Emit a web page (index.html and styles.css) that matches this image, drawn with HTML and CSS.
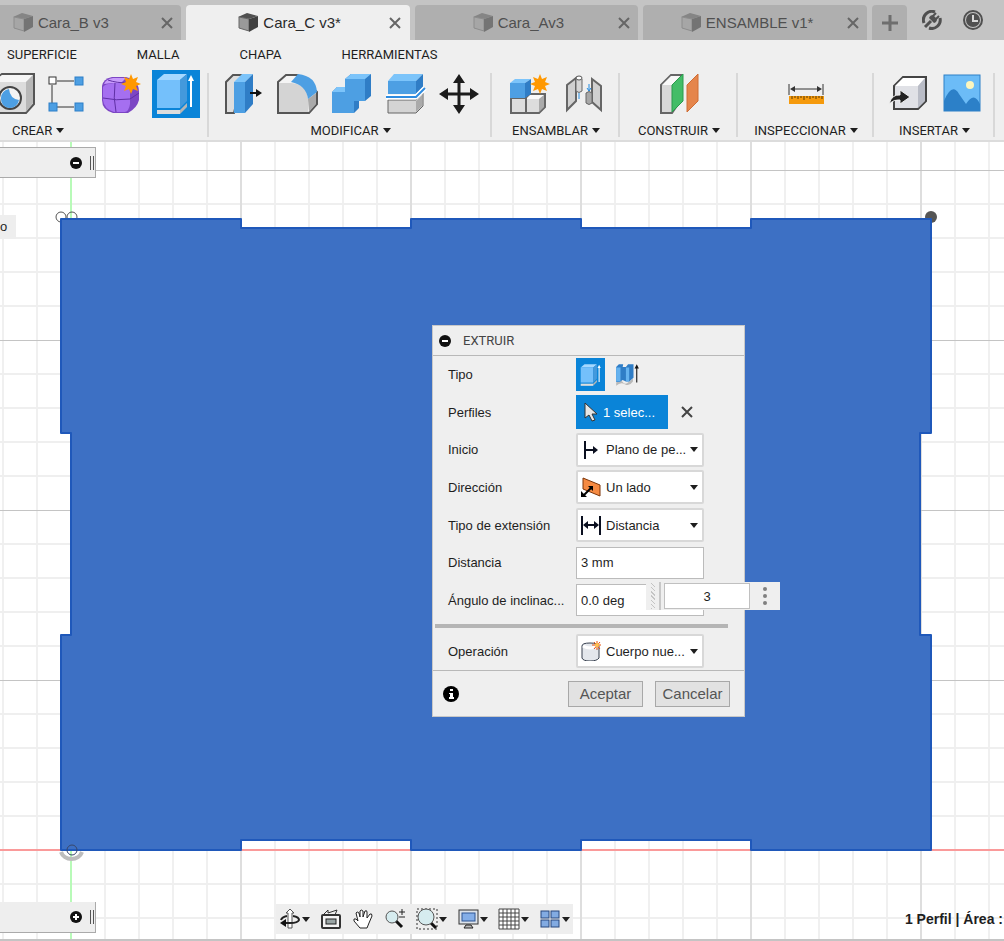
FILE: index.html
```
<!DOCTYPE html>
<html lang="es">
<head>
    <meta charset="UTF-8">
    <meta name="viewport" content="width=device-width, initial-scale=1.0">
    <title>Cara_C v3*</title>
    <link rel="stylesheet" href="styles.css">
</head>
<body>

    <!-- Símbolos compartidos -->
    <svg class="symbols" width="0" height="0" aria-hidden="true">
        <symbol id="cube" viewBox="0 0 20 20">
            <path d="M0 4 L9 0 L20 3 L11 6 Z" fill="#858585"/>
            <path d="M1 4 L11 6 L11 18 L1 15 Z" fill="#a6a6a6" stroke="#8c8c8c"/>
            <path d="M11 6 L20 3 L20 14 L11 19 Z" fill="#747474"/>
        </symbol>
        <symbol id="cube-dark" viewBox="0 0 20 20">
            <path d="M0 4 L9 0 L20 3 L11 6 Z" fill="#505050"/>
            <path d="M1 4 L11 6 L11 18 L1 15 Z" fill="#9a9a9a" stroke="#666"/>
            <path d="M11 6 L20 3 L20 14 L11 19 Z" fill="#404040"/>
        </symbol>
        <symbol id="cross" viewBox="0 0 12 12">
            <path d="M1 1 L11 11 M11 1 L1 11" stroke="currentColor" stroke-width="2"/>
        </symbol>
        <symbol id="star" viewBox="0 0 20 20">
            <path d="M10 0 L12 5 L17 3 L15 8 L20 10 L15 12 L17 17 L12 15 L10 20 L8 15 L3 17 L5 12 L0 10 L5 8 L3 3 L8 5 Z" fill="#ff9800"/>
        </symbol>
        <symbol id="extrude" viewBox="0 0 48 48">
            <path d="M5 40 H28 V44 H5 Z" fill="#ddd"/>
            <path d="M28 40 L35 33 V37 L28 44 Z" fill="#b5b5b5"/>
            <path d="M5 10 L12 4 H35 L28 10 Z" fill="#a5d8ff"/>
            <path d="M5 10 H28 V38 H5 Z" fill="#74c0fb"/>
            <path d="M28 10 L35 4 V31 L28 38 Z" fill="#4399dc"/>
            <path d="M39 37 V9" stroke="#fff" stroke-width="2"/>
            <path d="M36 11 L39 5 L42 11 Z" fill="#fff"/>
        </symbol>
    </svg>

    <header class="header">
        <div class="tab-bar">
            <nav class="tabs">
                <div class="tab">
                    <svg class="tab-icon"><use href="#cube"/></svg>
                    <span class="tab-name">Cara_B v3</span>
                    <button class="tab-close" aria-label="Cerrar Cara_B"><svg><use href="#cross"/></svg></button>
                </div>
                <div class="tab active">
                    <svg class="tab-icon"><use href="#cube-dark"/></svg>
                    <span class="tab-name">Cara_C v3*</span>
                    <button class="tab-close" aria-label="Cerrar Cara_C"><svg><use href="#cross"/></svg></button>
                </div>
                <div class="tab">
                    <svg class="tab-icon"><use href="#cube"/></svg>
                    <span class="tab-name">Cara_Av3</span>
                    <button class="tab-close" aria-label="Cerrar Cara_A"><svg><use href="#cross"/></svg></button>
                </div>
                <div class="tab">
                    <svg class="tab-icon"><use href="#cube"/></svg>
                    <span class="tab-name">ENSAMBLE v1*</span>
                    <button class="tab-close" aria-label="Cerrar ENSAMBLE"><svg><use href="#cross"/></svg></button>
                </div>
                <button class="tab-new" aria-label="Nueva pestaña">
                    <svg width="16" height="16" viewBox="0 0 16 16"><path d="M8 0 V16 M0 8 H16" stroke="#6e6e6e" stroke-width="3"/></svg>
                </button>
            </nav>
            <div class="tab-tools">
                <button aria-label="Extensiones">
                    <svg width="20" height="20" viewBox="0 0 20 20" fill="none">
                        <path d="M13 2 A8.500 8.500 0 0 0 2 13 M7 18 A8.500 8.500 0 0 0 18 8" stroke="#505050" stroke-width="3"/>
                        <path d="M3 17 L9 11" stroke="#505050" stroke-width="3"/>
                        <path d="M7 8 Q8 5 11 5 L15 9 Q15 12 12 13 Z" fill="#505050"/>
                        <path d="M11 6 L14 3 M14 9 L17 6" stroke="#505050" stroke-width="2"/>
                    </svg>
                </button>
                <button aria-label="Estado del trabajo">
                    <svg width="20" height="20" viewBox="0 0 20 20" fill="none">
                        <circle cx="10" cy="10" r="9" stroke="#505050" stroke-width="2"/>
                        <circle cx="10" cy="10" r="7" fill="#505050"/>
                        <path d="M10 5 V11 H15" stroke="#d8d8d8" stroke-width="2"/>
                    </svg>
                </button>
            </div>
        </div>

        <nav class="menu">
            <a href="#superficie">SUPERFICIE</a>
            <a href="#malla">MALLA</a>
            <a href="#chapa">CHAPA</a>
            <a href="#herramientas">HERRAMIENTAS</a>
        </nav>

        <div class="toolbar">
            <div class="group group-create">
                <div class="tools">
                    <button class="tool" aria-label="Agujero">
                        <svg viewBox="0 0 48 48">
                            <path d="M2 12 L12 4 H44 V34 L36 43 H2 Z" fill="#dcdcdc" stroke="#555" stroke-width="2"/>
                            <path d="M2 12 L12 5 H43 L36 12 Z" fill="#f6f6f6"/>
                            <path d="M36 12 L43 5 V33 L36 42 Z" fill="#b8b8b8"/>
                            <circle cx="20" cy="28" r="11" fill="#f4f4f4" stroke="#444" stroke-width="2"/>
                            <path d="M19 19 Q20 29 29 30 A9 9 0 0 1 11 28 A9 9 0 0 1 19 19 Z" fill="#4d9fe3"/>
                        </svg>
                    </button>
                    <button class="tool" aria-label="Crear boceto">
                        <svg viewBox="0 0 48 48">
                            <path d="M8 15 V33 M13 11 H30 M13 37 H30" stroke="#333" stroke-width="1"/>
                            <rect x="5" y="7" width="7" height="7" fill="#fff" stroke="#333"/>
                            <rect x="31" y="7" width="8" height="8" fill="#4d9fe3" stroke="#2c7fc8"/>
                            <rect x="5" y="33" width="8" height="8" fill="#4d9fe3" stroke="#2c7fc8"/>
                            <rect x="31" y="33" width="8" height="8" fill="#4d9fe3" stroke="#2c7fc8"/>
                        </svg>
                    </button>
                    <button class="tool" aria-label="Crear forma">
                        <svg viewBox="0 0 48 48">
                            <path d="M4 16 Q5 9 14 7 H28 Q41 10 41 22 V30 Q39 38 30 43 H15 Q4 40 4 30 Z" fill="#7c46c4"/>
                            <path d="M5 17 Q6 14 16 13 H26 Q32 15 32 22 V34 Q31 41 27 42 H16 Q6 39 5 30 Z" fill="#a56ff0"/>
                            <path d="M6 14 Q8 9 15 8 H28 L23 13 H14 Z" fill="#c79bfb"/>
                            <path d="M5 28 Q18 31 32 29 L41 23 M17 13 Q15 28 18 42 M10 10 Q18 13 31 13" fill="none" stroke="#5f2fa5"/>
                            <use href="#star" x="23" y="4" width="20" height="20"/>
                        </svg>
                    </button>
                    <button class="tool selected" aria-label="Extruir"><svg><use href="#extrude"/></svg></button>
                </div>
                <button class="group-name">CREAR<i class="caret"></i></button>
            </div>

            <div class="group">
                <div class="tools">
                    <button class="tool" aria-label="Pulsar/tirar">
                        <svg viewBox="0 0 48 48">
                            <path d="M7 12 L14 5 H24 L15 43 H7 Z" fill="#dedede" stroke="#555" stroke-width="2"/>
                            <path d="M15 12 L23 4 H34 L26 12 Z" fill="#7cc4fa"/>
                            <path d="M15 12 H26 V43 H15 Z" fill="#4d9fe3"/>
                            <path d="M26 12 L34 4 V34 L26 43 Z" fill="#2f7dc6"/>
                            <path d="M31 23 H38" stroke="#111" stroke-width="2"/>
                            <path d="M37 19 L43 23 L37 27 Z" fill="#111"/>
                        </svg>
                    </button>
                    <button class="tool" aria-label="Empalme">
                        <svg viewBox="0 0 48 48">
                            <path d="M5 12 L13 5 H24 L44 22 V34 L36 43 H5 Z" fill="#f4f4f4" stroke="#555" stroke-width="2"/>
                            <path d="M6 13 H18 Q34 14 35 29 V42 H6 Z" fill="#d4d4d4"/>
                            <path d="M35 29 L43 23 V34 L36 42 Z" fill="#aaa"/>
                            <path d="M18 12 L25 4 Q43 6 44 22 L35 29 Q33 15 18 12 Z" fill="#4d9fe3"/>
                        </svg>
                    </button>
                    <button class="tool" aria-label="Combinar">
                        <svg viewBox="0 0 48 48">
                            <path d="M5 22 L10 17 H18 V9 L24 4 H44 V26 L38 31 H32 V38 L27 43 H5 Z" fill="#2f7dc6"/>
                            <path d="M5 22 H18 V9 H38 V31 H27 V43 H5 Z" fill="#4d9fe3"/>
                            <path d="M5 22 L10 17 H18 V22 Z M18 9 L24 4 H44 L38 9 Z" fill="#7cc4fa"/>
                        </svg>
                    </button>
                    <button class="tool" aria-label="Dividir cuerpo">
                        <svg viewBox="0 0 48 48">
                            <path d="M7 30 H35 L42 23 V36 L35 43 H7 Z" fill="#d4d4d4" stroke="#666" stroke-width="1"/>
                            <path d="M35 31 L41 25 V36 L35 42 Z" fill="#aaa"/>
                            <path d="M7 11 L13 4 H42 L35 11 Z" fill="#7cc4fa"/>
                            <path d="M7 11 H35 V24 H7 Z" fill="#4d9fe3"/>
                            <path d="M35 11 L42 4 V17 L35 24 Z" fill="#2f7dc6"/>
                            <path d="M5 27 H35 L44 18" fill="none" stroke="#fff" stroke-width="5"/>
                            <path d="M5 27 H35 L44 18" fill="none" stroke="#2f8ce0" stroke-width="2"/>
                        </svg>
                    </button>
                    <button class="tool" aria-label="Desplazar">
                        <svg viewBox="0 0 48 48">
                            <path d="M24 10 V38 M10 24 H38" stroke="#1c1c1c" stroke-width="3"/>
                            <path d="M24 4 L30 13 H18 Z M24 44 L30 35 H18 Z M4 24 L13 18 V30 Z M44 24 L35 18 V30 Z" fill="#1c1c1c"/>
                        </svg>
                    </button>
                </div>
                <button class="group-name">MODIFICAR<i class="caret"></i></button>
            </div>

            <div class="group">
                <div class="tools">
                    <button class="tool" aria-label="Nuevo componente">
                        <svg viewBox="0 0 48 48">
                            <path d="M6 28 H21 L25 24 H40 V37 L34 43 H6 Z" fill="#ddd" stroke="#666" stroke-width="2"/>
                            <path d="M21 29 L25 25 H39 L34 29 Z" fill="#fafafa"/>
                            <path d="M34 29 L39 25 V37 L34 42 Z" fill="#aaa"/>
                            <path d="M21 28 V43" stroke="#666" stroke-width="2"/>
                            <path d="M5 13 L10 9 H26 L20 13 Z" fill="#7cc4fa"/>
                            <path d="M5 13 H20 V28 H5 Z" fill="#4d9fe3"/>
                            <path d="M20 13 L26 9 V24 L20 28 Z" fill="#2f7dc6"/>
                            <use href="#star" x="25" y="4" width="20" height="20"/>
                        </svg>
                    </button>
                    <button class="tool" aria-label="Unión">
                        <svg viewBox="0 0 48 48">
                            <path d="M8 15 L17 8 V31 L8 40 Z" fill="#d0d0d0" stroke="#666" stroke-width="2"/>
                            <path d="M17 9 Q20 5 23 9 V21 Q20 24 17 21 Z" fill="#d6d6d6" stroke="#666" stroke-width="1"/>
                            <ellipse cx="20" cy="8" rx="3" ry="2" fill="#fff" stroke="#555"/>
                            <path d="M33 9 L42 16 V40 L33 32 Z" fill="#d0d0d0" stroke="#666" stroke-width="2"/>
                            <path d="M27 23 Q30 20 33 23 V33 Q30 36 27 33 Z" fill="#a8a8a8" stroke="#666" stroke-width="1"/>
                            <path d="M20 23 V29 M30 14 V21 M28 18 L30 21 L32 18" fill="none" stroke="#218ae0" stroke-width="1"/>
                        </svg>
                    </button>
                </div>
                <button class="group-name">ENSAMBLAR<i class="caret"></i></button>
            </div>

            <div class="group">
                <div class="tools">
                    <button class="tool" aria-label="Plano de desfase">
                        <svg viewBox="0 0 48 48">
                            <path d="M6 15 L16 5 H26 V30 L17 43 H6 Z" fill="#d8d8d8" stroke="#666" stroke-width="2"/>
                            <path d="M7 15 L16 6 H25 L17 15 Z" fill="#f8f8f8"/>
                            <path d="M17 15 L28 4 V31 L17 42 Z" fill="#43bd67" stroke="#2a9a4c"/>
                            <path d="M32 15 L43 4 V31 L32 42 Z" fill="#e5854b" stroke="#cf6c34"/>
                        </svg>
                    </button>
                </div>
                <button class="group-name">CONSTRUIR<i class="caret"></i></button>
            </div>

            <div class="group">
                <div class="tools">
                    <button class="tool" aria-label="Medir">
                        <svg viewBox="0 0 48 48">
                            <path d="M7 14 V25 M41 14 V25 M10 19 H38" stroke="#333" stroke-width="1"/>
                            <path d="M8 19 L13 16 V22 Z M40 19 L35 16 V22 Z" fill="#333"/>
                            <path d="M7 26 H42 V34 H7 Z" fill="#f59a0c"/>
                            <path d="M10 26 V29 M13 26 V28 M16 26 V29 M19 26 V28 M22 26 V30 M25 26 V28 M28 26 V29 M31 26 V28 M34 26 V29 M37 26 V28 M40 26 V29" stroke="#5a3b00"/>
                        </svg>
                    </button>
                </div>
                <button class="group-name">INSPECCIONAR<i class="caret"></i></button>
            </div>

            <div class="group">
                <div class="tools">
                    <button class="tool" aria-label="Insertar derivado">
                        <svg viewBox="0 0 48 48">
                            <path d="M10 16 L19 7 H42 V31 L34 39 H10 Z" fill="#e0e1e6" stroke="#444" stroke-width="2"/>
                            <path d="M11 16 L19 8 H41 L34 16 Z" fill="#fff"/>
                            <path d="M34 16 L41 8 V31 L34 38 Z" fill="#b9bcc6"/>
                            <path d="M5 34 Q8 24 16 25 V20 L26 27 L16 34 V30 Q10 29 5 34 Z" fill="#222" stroke="#eee"/>
                        </svg>
                    </button>
                    <button class="tool" aria-label="Lienzo">
                        <svg viewBox="0 0 48 48">
                            <rect x="6" y="5" width="36" height="36" fill="#6cbcf7"/>
                            <path d="M6 31 Q14 12 21 24 L28 34 Q36 21 42 34 V41 H6 Z" fill="#2c80c8"/>
                            <circle cx="32" cy="15" r="4" fill="#fdf6bd"/>
                            <rect x="6" y="5" width="36" height="36" fill="none" stroke="#2c80c8"/>
                        </svg>
                    </button>
                </div>
                <button class="group-name">INSERTAR<i class="caret"></i></button>
            </div>
        </div>
    </header>

    <main class="canvas">
        <svg class="sketch" aria-hidden="true">
            <defs>
                <pattern id="grid" x="71" y="28" width="170" height="170" patternUnits="userSpaceOnUse">
                    <path d="M34 0 V170 M68 0 V170 M102 0 V170 M136 0 V170" stroke="#f0f0f0" stroke-width="2"/>
                    <path d="M0 34 H170 M0 68 H170 M0 102 H170 M0 136 H170" stroke="#efefef" stroke-width="2"/>
                    <path d="M0 0 V170 M170 0 V170" stroke="#dedede" stroke-width="2"/>
                    <path d="M0 0 H170" stroke="#c4c4c4" stroke-width="2"/>
                </pattern>
            </defs>
            <rect width="100%" height="100%" fill="url(#grid)"/>
            <!-- origen del boceto -->
            <svg x="71" y="708" overflow="visible">
                <path d="M-71 0 H4000" stroke="#fa9a9a" stroke-width="2"/>
                <path d="M0 -708 V200" stroke="#b8fab8" stroke-width="2"/>
                <path d="M-10 2 A11 10 0 0 0 11 2" fill="none" stroke="#bdbdbd" stroke-width="4"/>
                <g fill="none" stroke="#555">
                    <circle cx="-10" cy="-633" r="5"/>
                    <circle cx="1" cy="-633" r="5"/>
                </g>
                <circle cx="860" cy="-633" r="6" fill="#555"/>
                <path d="M-10 -631 H170 V-622 H340 V-631 H510 V-622 H680 V-631 H860 V-417 H849 V-215 H860 V0 H680 V-10 H510 V0 H340 V-10 H170 V0 H-10 V-215 H0 V-417 H-10 Z" fill="#3d70c4" stroke="#1f58ba" stroke-width="2" stroke-linejoin="round"/>
                <circle cx="1" cy="0" r="5" fill="none" stroke="#39476b"/>
            </svg>
        </svg>

        <div class="dock dock-top">
            <svg width="12" height="12" viewBox="0 0 12 12"><circle cx="6" cy="6" r="6" fill="#111"/><path d="M3 6 H9" stroke="#fff" stroke-width="2"/></svg>
            <i class="dock-grip"></i>
        </div>
        <div class="node-tag">o</div>

        <form class="dialog">
            <h2 class="dialog-title">
                <svg width="12" height="12" viewBox="0 0 12 12"><circle cx="6" cy="6" r="6" fill="#111"/><path d="M3 6 H9" stroke="#fff" stroke-width="2"/></svg>
                EXTRUIR
            </h2>
            <div class="fields">
                <div class="field">
                    <span class="field-name">Tipo</span>
                    <button type="button" class="type-button selected" aria-label="Extruir"><svg><use href="#extrude"/></svg></button>
                    <button type="button" class="type-button" aria-label="Extrusión fina">
                        <svg viewBox="0 0 48 48">
                            <path d="M4 38 Q12 30 16 37 T28 36 L35 31 V36 Q28 46 20 41 T4 44 Z" fill="#b9b9b9"/>
                            <path d="M4 9 L9 4 H17 L16 9 H22 L26 4 H36 V29 L28 36 H22 L16 33 L10 37 H4 Z" fill="#2f7dc6"/>
                            <path d="M4 10 H12 V36 H4 Z M22 10 H28 V36 H22 Z" fill="#65b2ef"/>
                            <path d="M42 38 V10" stroke="#111" stroke-width="2"/>
                            <path d="M38 12 L42 4 L46 12 Z" fill="#111"/>
                        </svg>
                    </button>
                </div>
                <div class="field">
                    <span class="field-name">Perfiles</span>
                    <button type="button" class="selection">
                        <svg width="14" height="20" viewBox="0 0 14 20"><path d="M1 1 V16 L5 13 L8 19 L11 18 L8 12 H13 Z" fill="#e6e6e6" stroke="#333"/></svg>
                        1 selec...
                    </button>
                    <button type="button" class="clear" aria-label="Borrar selección"><svg><use href="#cross"/></svg></button>
                </div>
                <div class="field">
                    <label class="field-name" for="start">Inicio</label>
                    <div class="picker">
                        <svg viewBox="0 0 20 20"><path d="M4 1 V19" stroke="#0b1020" stroke-width="2"/><path d="M5 10 H14" stroke="#0b1020" stroke-width="2"/><path d="M12 6 L17 10 L12 14 Z" fill="#0b1020"/></svg>
                        <select id="start"><option>Plano de pe...</option></select>
                    </div>
                </div>
                <div class="field">
                    <label class="field-name" for="direction">Dirección</label>
                    <div class="picker">
                        <svg viewBox="0 0 20 20"><path d="M2 1 L19 8 V19 L2 12 Z" fill="#f58a42" stroke="#7d3509"/><path d="M3 18 L10 11" stroke="#000" stroke-width="2"/><path d="M0 20 V14 L6 20 Z M12 9 V14 L7 9 Z" fill="#000"/></svg>
                        <select id="direction"><option>Un lado</option></select>
                    </div>
                </div>
                <div class="field">
                    <label class="field-name" for="extent">Tipo de extensión</label>
                    <div class="picker">
                        <svg viewBox="0 0 20 20"><path d="M1 1 V20 M19 1 V20" stroke="#0b1020" stroke-width="2"/><path d="M4 10 H16" stroke="#0b1020" stroke-width="2"/><path d="M2 10 L7 6 V14 Z M18 10 L13 6 V14 Z" fill="#0b1020"/></svg>
                        <select id="extent"><option>Distancia</option></select>
                    </div>
                </div>
                <div class="field">
                    <label class="field-name" for="distance">Distancia</label>
                    <input class="value" id="distance" type="text" value="3 mm">
                </div>
                <div class="field">
                    <label class="field-name" for="taper">Ángulo de inclinac...</label>
                    <input class="value" id="taper" type="text" value="0.0 deg">
                </div>
            </div>
            <hr class="divider">
            <div class="field field-operation">
                <label class="field-name" for="operation">Operación</label>
                <div class="picker">
                    <svg viewBox="0 0 20 20"><path d="M1 5 Q1 2 9 2 T18 5 V17 Q16 20 9 20 T1 17 Z" fill="#e4e7ec" stroke="#38404f" stroke-width="1"/><path d="M2 5 Q9 9 17 5" fill="none" stroke="#fff" stroke-width="3"/><path d="M16 0 V9 M11 4 H20 M13 1 L19 8 M19 1 L13 8" stroke="#e8500d" stroke-width="1"/><circle cx="16" cy="4" r="2" fill="#ffc44d"/></svg>
                    <select id="operation"><option>Cuerpo nue...</option></select>
                </div>
            </div>
            <div class="dialog-footer">
                <svg width="16" height="16" viewBox="0 0 16 16"><circle cx="8" cy="8" r="8" fill="#000"/><path d="M7 3 H10 V5 H7 Z M6 7 H10 V11 H11 V13 H6 V11 H7 V8 H6 Z" fill="#fff"/></svg>
                <button type="button">Aceptar</button>
                <button type="button">Cancelar</button>
            </div>
        </form>

        <div class="quick-input">
            <i class="grip"></i>
            <input type="text" value="3" aria-label="Distancia">
            <button aria-label="Más opciones">
                <svg width="4" height="18" viewBox="0 0 4 18" fill="#808080"><circle cx="2" cy="2" r="2"/><circle cx="2" cy="9" r="2"/><circle cx="2" cy="16" r="2"/></svg>
            </button>
        </div>

        <div class="dock dock-bottom">
            <svg width="12" height="12" viewBox="0 0 12 12"><circle cx="6" cy="6" r="6" fill="#111"/><path d="M3 6 H9 M6 3 V9" stroke="#fff" stroke-width="2"/></svg>
            <i class="dock-grip"></i>
        </div>

        <div class="nav-bar">
            <button aria-label="Orbitar">
                <svg viewBox="0 0 22 22" fill="none"><path d="M9 20 V5 H7 L11 1 L15 5 H13 V20 Z" fill="#fff" stroke="#555"/><path d="M14 8 Q20 9 20 12 Q19 15 11 15 H7 M2 12 Q3 9 8 8" stroke="#222" stroke-width="2"/><path d="M1 15 L7 11 V19 Z" fill="#111"/></svg>
                <i class="caret"></i>
            </button>
            <button aria-label="Mirar a">
                <svg viewBox="0 0 22 22"><path d="M3 7 L8 2 L8 5 L17 2 L15 7" fill="#eee" stroke="#333"/><rect x="2" y="7" width="18" height="13" rx="1" fill="#f4f4f4" stroke="#333" stroke-width="2"/><rect x="6" y="11" width="10" height="5" fill="#9aa5a5" stroke="#222"/></svg>
            </button>
            <button aria-label="Encuadre">
                <svg viewBox="0 0 22 22"><path d="M8 20 L2 13 Q1 10 4 11 L6 13 L4 5 Q5 3 7 5 L8 9 L8 3 Q9 1 11 3 L11 9 L13 3 Q15 2 15 4 L15 10 L18 6 Q20 5 20 8 L17 15 L15 20 Z" fill="#fff" stroke="#222"/></svg>
            </button>
            <button aria-label="Zoom">
                <svg viewBox="0 0 22 22"><path d="M12 13 L18 19" stroke="#111" stroke-width="3"/><circle cx="8" cy="9" r="6" fill="#d6ecef" stroke="#555" stroke-width="1"/><path d="M18 1 V7 M15 4 H21 M15 9 H21" stroke="#222"/></svg>
            </button>
            <button aria-label="Ajustar">
                <svg viewBox="0 0 22 22"><rect x="1" y="1" width="20" height="20" fill="none" stroke="#333" stroke-dasharray="2 2"/><path d="M14 14 L20 20" stroke="#111" stroke-width="3"/><circle cx="10" cy="9" r="8" fill="#d6ecef" stroke="#555" stroke-width="1"/></svg>
                <i class="caret"></i>
            </button>
            <button aria-label="Configuración de visualización">
                <svg viewBox="0 0 22 22"><rect x="2" y="2" width="19" height="14" fill="#dde3ea" stroke="#333" stroke-width="1"/><rect x="5" y="5" width="13" height="8" fill="#84aee8" stroke="#2c5593"/><path d="M9 17 H14 L16 20 H7 Z" fill="#bbb" stroke="#222"/></svg>
                <i class="caret"></i>
            </button>
            <button aria-label="Rejilla y forzados">
                <svg viewBox="0 0 22 22"><rect x="1" y="1" width="20" height="20" fill="#fff"/><path d="M1 1 V21 M5 1 V21 M9 1 V21 M13 1 V21 M17 1 V21 M21 1 V21 M1 1 H21 M1 5 H21 M1 9 H21 M1 13 H21 M1 17 H21 M1 21 H21" stroke="#444"/></svg>
                <i class="caret"></i>
            </button>
            <button aria-label="Ventanas gráficas">
                <svg viewBox="0 0 22 22" fill="#82abe2" stroke="#27477c" stroke-width="1"><rect x="2" y="3" width="8" height="7"/><rect x="12" y="3" width="8" height="7"/><rect x="2" y="12" width="8" height="7"/><rect x="12" y="12" width="8" height="7"/></svg>
                <i class="caret"></i>
            </button>
        </div>
        <div class="status">1 Perfil | Área :</div>
    </main>
</body>
</html>
```
FILE: styles.css
```
* {
    margin: 0;
    padding: 0;
    box-sizing: border-box;
}

body {
    font-family: Roboto, "Liberation Sans", sans-serif;
    font-size: 13px;
    color: #1e1e1e;
    min-height: 100vh;
    display: flex;
    flex-direction: column;
    overflow: hidden;
}

button,
input,
select {
    font: inherit;
    color: inherit;
    border: none;
    background: none;
}

button {
    cursor: pointer;
}

a {
    color: inherit;
    text-decoration: none;
}

.symbols {
    position: absolute;
}

.caret {
    display: inline-block;
    border: 4px solid transparent;
    border-top: 5px solid #1e1e1e;
    border-bottom: none;
}

/* Pestañas */
.header {
    background: #efefef;
    border-bottom: 2px solid #dcdcdc;
}

.tab-bar {
    display: flex;
    height: 40px;
    background: #c4c4c4;
}

.tabs {
    flex: 1;
    display: flex;
    gap: 5px;
    margin-left: -43px;
    padding-top: 5px;
}

.tab {
    flex: 1;
    display: flex;
    align-items: center;
    padding: 0 8px 0 4px;
    border-radius: 4px 4px 0 0;
    background: #afafaf;
    color: #505050;
    font: 15px "Liberation Sans", Arial, sans-serif;
}

.tab.active {
    background: #efefef;
    color: #2a2a2a;
}

.tab-icon {
    width: 20px;
    height: 20px;
    margin: 0 5px 0 auto;
}

.tab-name {
    margin-right: auto;
    white-space: nowrap;
}

.tab-close {
    width: 12px;
    height: 12px;
    color: #666;
}

.tab-close svg,
.clear svg {
    display: block;
    width: 12px;
    height: 12px;
}

.tab-new {
    width: 35px;
    border-radius: 4px 4px 0 0;
    background: #afafaf;
}

.tab-new svg {
    display: block;
    margin: auto;
}

.tab-tools {
    width: 97px;
    display: flex;
    align-items: center;
    gap: 21px;
    padding-left: 15px;
}

.tab-tools svg {
    display: block;
}

/* Menú y herramientas */
.menu {
    display: flex;
    align-items: center;
    gap: 60px;
    height: 28px;
    padding-left: 7px;
}

.toolbar {
    display: grid;
    grid-template-columns: 209fr 283fr 128fr 118fr 136fr 121fr 9fr;
    padding-top: 2px;
}

.group {
    min-width: 0;
    display: flex;
    flex-direction: column;
    align-items: center;
    overflow: hidden;
    background: linear-gradient(#d8d8d8, #d8d8d8) right center / 2px 64px no-repeat;
}

.tools {
    display: flex;
    justify-content: center;
    gap: 6px;
}

.tool {
    flex: none;
    width: 48px;
    height: 48px;
}

.tool svg {
    display: block;
    width: 48px;
    height: 48px;
}

.tool.selected,
.type-button.selected {
    background: #0a84d8;
}

.group-name {
    display: flex;
    align-items: center;
    gap: 4px;
    height: 22px;
    padding-top: 2px;
}

.group-create {
    align-items: flex-start;
}

.group-create .tools {
    align-self: flex-end;
    padding-right: 9px;
}

.group-create .group-name {
    padding-left: 12px;
}

/* Lienzo */
.canvas {
    position: relative;
    flex: 1;
    background: #fff;
    border-bottom: 2px solid #c4c4c4;
    font-family: "Liberation Sans", Arial, sans-serif;
}

.sketch {
    position: absolute;
    width: 100%;
    height: 100%;
}

.dock {
    position: absolute;
    left: 0;
    display: flex;
    align-items: center;
    justify-content: flex-end;
    gap: 8px;
    width: 96px;
    height: 31px;
    padding-right: 1px;
    background: #eee;
    border: 1px solid #aaa;
    border-left: none;
}

.dock-top {
    top: 5px;
}

.dock-bottom {
    bottom: 6px;
    border-top: none;
}

.dock-grip {
    width: 4px;
    height: 14px;
    border: 1px solid #555;
    border-width: 0 1px;
}

.node-tag {
    position: absolute;
    left: 0;
    top: 73px;
    width: 16px;
    height: 24px;
    line-height: 24px;
    background: #eee;
}

/* Cuadro de diálogo */
.dialog {
    position: absolute;
    left: 432px;
    top: 183px;
    width: 313px;
    background: #efefef;
    border: 1px solid #c8c8c8;
}

.dialog-title {
    display: flex;
    align-items: center;
    gap: 12px;
    height: 30px;
    padding-left: 6px;
    border-bottom: 1px solid #b8b8b8;
    font: 13px Roboto, sans-serif;
    color: #444;
}

.fields {
    display: grid;
    grid-auto-rows: 1fr;
    height: 263px;
}

.field {
    display: flex;
    align-items: center;
    padding-left: 15px;
}

.field-name {
    width: 128px;
    white-space: nowrap;
}

.type-button {
    width: 29px;
    height: 33px;
    margin-right: 7px;
}

.type-button svg {
    display: block;
    width: 26px;
    height: 26px;
    margin: auto;
}

.selection {
    display: flex;
    align-items: center;
    gap: 5px;
    width: 92px;
    height: 34px;
    padding-left: 8px;
    background: #0a84d8;
    color: #fff;
    white-space: nowrap;
}

.clear {
    margin-left: 13px;
    color: #444;
}

.picker {
    display: grid;
    align-items: center;
    width: 128px;
}

.picker svg {
    grid-area: 1 / 1;
    z-index: 1;
    width: 20px;
    height: 20px;
    margin-left: 5px;
    pointer-events: none;
}

.picker select {
    grid-area: 1 / 1;
    width: 100%;
    height: 34px;
    padding-left: 28px;
    appearance: none;
    border: 2px solid #d8d8d8;
    border-radius: 2px;
    background: #fff;
}

.picker::after {
    content: "";
    grid-area: 1 / 1;
    justify-self: end;
    margin-right: 6px;
    border: 4px solid transparent;
    border-top: 5px solid #1e1e1e;
    border-bottom: none;
    pointer-events: none;
}

.value {
    width: 128px;
    height: 32px;
    padding-left: 4px;
    border: 1px solid #bbb;
    background: #fff;
}

.divider {
    width: 293px;
    height: 4px;
    margin: 5px 0 4px 2px;
    border: none;
    background: #b5b5b5;
}

.field-operation {
    height: 38px;
}

.dialog-footer {
    display: flex;
    align-items: center;
    height: 46px;
    padding: 0 14px 0 10px;
    gap: 12px;
    border-top: 1px solid #b8b8b8;
}

.dialog-footer svg {
    margin-right: auto;
}

.dialog-footer button {
    width: 75px;
    height: 26px;
    border: 1px solid #a8a8a8;
    background: #e2e2e2;
    color: #555;
    font-size: 15px;
}

.quick-input {
    position: absolute;
    left: 646px;
    top: 440px;
    display: flex;
    width: 134px;
    height: 28px;
    background: #efefef;
}

.grip {
    width: 15px;
    margin-right: 3px;
    padding: 1px 4px 1px 5px;
    border-right: 2px solid #c8c8c8;
    background: repeating-linear-gradient(45deg, #c4c4c4 0 1px, #efefef 1px 3px) content-box;
}

.quick-input input {
    width: 86px;
    height: 26px;
    margin-top: 1px;
    border: 1px solid #c0c0c0;
    background: #fff;
    text-align: center;
}

.quick-input button {
    flex: 1;
}

.quick-input svg {
    display: block;
    margin: auto;
}

/* Barra de navegación */
.nav-bar {
    position: absolute;
    left: 276px;
    bottom: 5px;
    display: flex;
    align-items: center;
    gap: 10px;
    height: 30px;
    padding: 0 3px;
    background: #eee;
}

.nav-bar button {
    display: flex;
    align-items: center;
    gap: 1px;
}

.nav-bar svg {
    width: 22px;
    height: 22px;
}

.status {
    position: absolute;
    right: 1px;
    bottom: 12px;
    font-size: 14px;
    font-weight: bold;
}
```
